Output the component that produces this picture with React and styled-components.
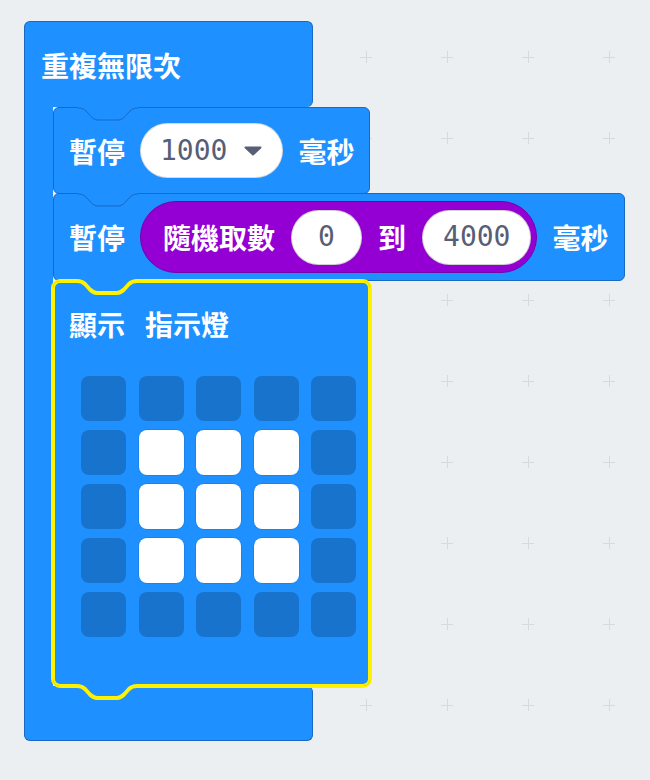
import React from 'react';
import styled, { createGlobalStyle } from 'styled-components';

const BLUE = '#1E90FF';
const BLUE_EDGE = '#1769C2';
const PURPLE = '#9400D3';
const PURPLE_EDGE = '#7700AA';
const YELLOW = '#FFF200';
const FIELD_TEXT = '#575E75';

// notch curve, edge at y=4, 60 wide, 12 deep
const NOTCH = 'M0 4 C4 4 6 5 8 7 L13 12.5 C15 14.5 17 16 20 16 H40 C43 16 45 14.5 47 12.5 L52 7 C54 5 56 4 60 4';

const GlobalStyle = createGlobalStyle`
  html, body {
    margin: 0;
    padding: 0;
    background: #eceff1;
  }
  body {
    font-family: "Noto Sans CJK TC", "Noto Sans", sans-serif;
  }
  * {
    box-sizing: border-box;
  }
`;

const Workspace = styled.div`
  position: relative;
  width: 650px;
  height: 780px;
  overflow: hidden;
  padding: 21px 0 0 24px;
`;

const GridLayer = styled.svg`
  position: absolute;
  inset: 0;
  width: 100%;
  height: 100%;
`;

const Loop = styled.div`
  position: relative;
  z-index: 1;
  display: flex;
  flex-direction: column;
  align-items: flex-start;
`;

const LoopHead = styled.div`
  width: 289px;
  height: 86px;
  display: flex;
  align-items: center;
  padding-left: 16px;
  background: ${BLUE};
  border: 1px solid ${BLUE_EDGE};
  border-bottom: none;
  border-radius: 6px 6px 6px 0;
`;

const LoopBody = styled.div`
  display: flex;
  align-items: stretch;
`;

const LoopArm = styled.div`
  width: 29px;
  background: ${BLUE};
  border-left: 1px solid ${BLUE_EDGE};
`;

const Stack = styled.div`
  display: flex;
  flex-direction: column;
  align-items: flex-start;
`;

const LoopFoot = styled.div`
  width: 289px;
  height: 55px;
  background: ${BLUE};
  border: 1px solid ${BLUE_EDGE};
  border-top: none;
  border-radius: 0 6px 6px 6px;
`;

const Statement = styled.div`
  position: relative;
  display: flex;
  align-items: center;
  gap: 15px;
  height: ${({ $h }) => $h}px;
  padding: 0 15px;
  background: ${BLUE};
  border: 1px solid ${BLUE_EDGE};
  border-radius: 6px;
  & + & {
    margin-top: -1px;
  }
`;

const Label = styled.span`
  color: #fff;
  font-size: 28px;
  font-weight: 700;
  line-height: 1;
  white-space: nowrap;
`;

const NotchSvg = styled.svg`
  position: absolute;
  left: 24px;
  top: ${({ $top }) => $top}px;
  overflow: visible;
  z-index: 2;
`;

const TabSvg = styled.svg`
  position: absolute;
  left: 24px;
  bottom: -16px;
  overflow: visible;
  z-index: 2;
`;

const Dropdown = styled.div`
  display: flex;
  align-items: center;
  gap: 17px;
  height: 55px;
  padding: 0 20px 0 19px;
  background: #fff;
  border: 1px solid rgba(0, 0, 0, 0.15);
  border-radius: 28px;
`;

const Num = styled.span`
  font-family: "DejaVu Sans Mono", "Liberation Mono", monospace;
  font-size: 28px;
  line-height: 1;
  color: ${FIELD_TEXT};
`;

const NumberField = styled.div`
  display: flex;
  align-items: center;
  justify-content: center;
  height: 55px;
  min-width: 71px;
  padding: 0 20px;
  background: #fff;
  border: 1px solid rgba(0, 0, 0, 0.18);
  border-radius: 28px;
`;

const Reporter = styled.div`
  display: flex;
  align-items: center;
  gap: 16px;
  height: 72px;
  padding: 0 5px 0 22px;
  background: ${PURPLE};
  border: 1px solid ${PURPLE_EDGE};
  border-radius: 36px;
`;

const LedBlock = styled.div`
  position: relative;
  z-index: 1;
  display: flex;
  flex-direction: column;
  padding: 0 14px 49px 16px;
  background: ${BLUE};
  border-radius: 7px;
  box-shadow: 0 0 0 2px ${YELLOW}, inset 0 0 0 2px ${YELLOW};
`;

const LedTitle = styled.div`
  display: flex;
  align-items: center;
  gap: 20px;
  height: 86px;
`;

const LedGrid = styled.div`
  display: grid;
  grid-template-columns: repeat(5, 45px);
  column-gap: 12.5px;
  row-gap: 9px;
  margin: 9px 0 0 12px;
`;

const Led = styled.div`
  width: 45px;
  height: 45px;
  border-radius: 8px;
  background: ${({ $on }) => ($on ? '#fff' : 'rgba(0, 0, 0, 0.2)')};
  box-shadow: ${({ $on }) => ($on ? '0 0 0 1px rgba(0, 0, 0, 0.08)' : 'none')};
`;

const Notch = ({ stroke, width, top }) => (
  <NotchSvg width="60" height="20" $top={top}>
    <path d={`${NOTCH} V0 H0 Z`} fill={BLUE} />
    <path d={NOTCH} fill="none" stroke={stroke} strokeWidth={width} strokeLinejoin="round" />
  </NotchSvg>
);

const Tab = () => (
  <TabSvg width="60" height="20">
    <path d={`${NOTCH} V0 H0 Z`} fill={BLUE} />
    <path d={NOTCH} fill="none" stroke={YELLOW} strokeWidth="4" strokeLinejoin="round" />
  </TabSvg>
);

const Caret = () => (
  <svg width="18" height="10" viewBox="0 0 18 10">
    <polygon points="1.5,1.5 16.5,1.5 9,8.5" fill={FIELD_TEXT} stroke={FIELD_TEXT} strokeWidth="2" strokeLinejoin="round" />
  </svg>
);

const Grid = () => (
  <GridLayer>
    <defs>
      <pattern id="plus" width="81" height="81" patternUnits="userSpaceOnUse">
        <path d="M36 57.5 H48 M42.5 51 V63" stroke="#d6dadd" strokeWidth="1" />
      </pattern>
    </defs>
    <rect width="100%" height="100%" fill="url(#plus)" />
  </GridLayer>
);

const pattern = [
  '00000',
  '01110',
  '01110',
  '01110',
  '00000',
];

export default function App() {
  return (
    <>
      <GlobalStyle />
      <Workspace>
        <Grid />
        <Loop>
          <LoopHead>
            <Label>重複無限次</Label>
          </LoopHead>
          <LoopBody>
            <LoopArm />
            <Stack>
              <Statement $h={87}>
                <Notch stroke={BLUE_EDGE} width={1} top={-4.5} />
                <Label>暫停</Label>
                <Dropdown>
                  <Num>1000</Num>
                  <Caret />
                </Dropdown>
                <Label>毫秒</Label>
              </Statement>
              <Statement $h={88}>
                <Notch stroke={BLUE_EDGE} width={1} top={-4.5} />
                <Label>暫停</Label>
                <Reporter>
                  <Label>隨機取數</Label>
                  <NumberField>
                    <Num>0</Num>
                  </NumberField>
                  <Label>到</Label>
                  <NumberField>
                    <Num>4000</Num>
                  </NumberField>
                </Reporter>
                <Label>毫秒</Label>
              </Statement>
              <LedBlock>
                <Notch stroke={YELLOW} width={4} top={-4} />
                <LedTitle>
                  <Label>顯示</Label>
                  <Label>指示燈</Label>
                </LedTitle>
                <LedGrid>
                  {pattern.map((row, r) =>
                    row.split('').map((c, i) => <Led key={`${r}-${i}`} $on={c === '1'} />)
                  )}
                </LedGrid>
                <Tab />
              </LedBlock>
            </Stack>
          </LoopBody>
          <LoopFoot />
        </Loop>
      </Workspace>
    </>
  );
}
